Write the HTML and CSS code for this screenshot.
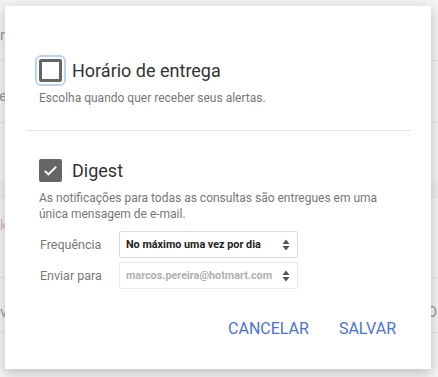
FILE: index.html
```html
<!DOCTYPE html>
<html lang="pt">
<head>
<meta charset="UTF-8">
<title>Alertas</title>
<link rel="stylesheet" href="styles.css">
</head>
<body>
  <div class="page">
    <div class="row r1"><span>r</span></div>
    <div class="row r2"><span>ei</span></div>
    <div class="row r3"></div>
    <div class="row band"></div>
    <div class="row r4"><span class="pink">k</span></div>
    <div class="row r5"><span>v</span><span class="right">O</span></div>
  </div>

  <div class="dialog">
    <div class="option">
      <div class="check-row">
        <div class="box focus"></div>
        <div class="title">Horário de entrega</div>
      </div>
      <p class="hint">Escolha quando quer receber seus alertas.</p>
    </div>

    <div class="divider"></div>

    <div class="option">
      <div class="check-row">
        <div class="box checked">
          <svg width="17" height="17" viewBox="0 0 24 24"><path d="M4 12.5l5 5L20 6.5" fill="none" stroke="#fff" stroke-width="2.8"/></svg>
        </div>
        <div class="title">Digest</div>
      </div>
      <p class="hint">As notificações para todas as consultas são entregues em uma única mensagem de e-mail.</p>

      <div class="field first">
        <span class="label">Frequência</span>
        <div class="select">
          <span>No máximo uma vez por dia</span>
          <svg width="8" height="12" viewBox="0 0 8 12"><path d="M4 0.5L7.5 5H0.5z M4 11.5L7.5 7H0.5z" fill="#555"/></svg>
        </div>
      </div>
      <div class="field">
        <span class="label">Enviar para</span>
        <div class="select muted">
          <span>marcos.pereira@hotmart.com</span>
          <svg width="8" height="12" viewBox="0 0 8 12"><path d="M4 0.5L7.5 5H0.5z M4 11.5L7.5 7H0.5z" fill="#555"/></svg>
        </div>
      </div>
    </div>

    <div class="actions">
      <button>Cancelar</button>
      <button>Salvar</button>
    </div>
  </div>
</body>
</html>
```

FILE: styles.css
```css
body {
  margin: 0;
  width: 438px;
  height: 377px;
  overflow: hidden;
  background: #f3f3f3;
  font-family: Roboto, "Liberation Sans", sans-serif;
  position: relative;
}

.row {
  position: relative;
  border-bottom: 1px solid #e2e2e2;
  color: #999;
  font-size: 15px;
}

.row span {
  position: absolute;
  left: 0;
}

.row .right {
  left: auto;
  right: 1px;
}

.row .pink {
  color: #d9b9bf;
}

.r1 { height: 60px; }
.r1 span { top: 26px; }
.r2 { height: 61px; }
.r2 span { top: 26px; left: -1px; }
.r3 { height: 58px; border-bottom: none; }
.band { height: 16px; background: #ececec; border-bottom: 1px solid #e6e6e6; }
.r4 { height: 79px; }
.r4 span { top: 18px; }
.r5 { height: 54px; }
.r5 span { top: 25px; }

.dialog {
  position: absolute;
  top: 6px;
  left: 5px;
  width: 426px;
  height: 363px;
  box-sizing: border-box;
  padding: 49px 20px 0 21px;
  background: #fff;
  box-shadow: 0 4px 12px rgba(0, 0, 0, 0.22);
}

.option {
  padding: 0 13px;
}

.check-row {
  display: flex;
  align-items: center;
  height: 31px;
}

.box {
  width: 23px;
  height: 23px;
  box-sizing: border-box;
  border: 3px solid #666;
  border-radius: 2px;
  display: flex;
  align-items: center;
  justify-content: center;
}

.box.focus {
  outline: 2px solid #bed1f1;
  outline-offset: 2px;
}

.box.checked {
  background: #666;
  border: none;
}

.title {
  margin-left: 10px;
  font-size: 18px;
  color: #333;
}

.hint {
  margin: 4px 0 0;
  font-size: 12px;
  line-height: 16px;
  color: #777;
}

.divider {
  height: 1px;
  background: #e3e3e3;
  margin: 24px 0 24px;
}

.field {
  display: flex;
  align-items: center;
  margin-top: 4px;
}

.field.first {
  margin-top: 9px;
}

.label {
  width: 79px;
  padding-left: 1px;
  font-size: 12.5px;
  color: #777;
}

.select {
  width: 179px;
  height: 27px;
  box-sizing: border-box;
  border: 1px solid #dcdcdc;
  border-radius: 2px;
  display: flex;
  align-items: center;
  justify-content: space-between;
  padding: 0 7px 0 6px;
  font-size: 10.8px;
  font-weight: bold;
  color: #222;
}

.select.muted {
  border-color: #eaeaea;
  color: #b0b0b0;
}

.actions {
  display: flex;
  justify-content: flex-end;
  gap: 30px;
  margin-top: 22px;
  padding-right: 15px;
}

.actions button {
  background: none;
  border: none;
  padding: 8px 0;
  font-family: inherit;
  font-size: 16px;
  text-transform: uppercase;
  color: #4a72d3;
  cursor: pointer;
}
```
